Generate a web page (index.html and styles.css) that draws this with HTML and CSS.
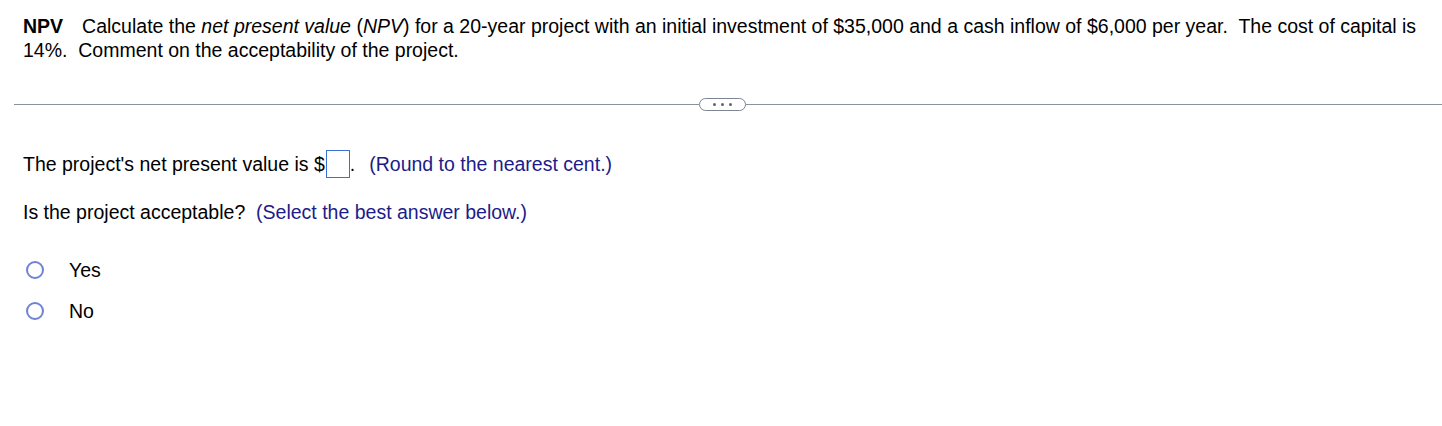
FILE: index.html
```html
<!DOCTYPE html>
<html>
<head>
<meta charset="utf-8">
<link rel="stylesheet" href="styles.css">
</head>
<body>
<div class="page">
  <div class="problem">
    <p class="stem"><b class="tag">NPV</b>Calculate the <i>net present value</i> (<i>NPV</i>) for a 20-year project with an initial investment of $35,000 and a cash inflow of $6,000 per year.&nbsp; The cost of capital is<br>14%.&nbsp; Comment on the acceptability of the project.</p>
  </div>
  <div class="divider">
    <span class="line line-left"></span>
    <span class="pill"><span class="dot"></span><span class="dot"></span><span class="dot"></span></span>
    <span class="line"></span>
  </div>
  <div class="answer">
    <p class="q">The project's net present value is $<span class="box"></span>.<span class="hint hint-gap">(Round to the nearest cent.)</span></p>
    <p class="q q2">Is the project acceptable?&nbsp; <span class="hint">(Select the best answer below.)</span></p>
    <ul class="choices">
      <li class="choice"><span class="radio"></span><span class="label">Yes</span></li>
      <li class="choice"><span class="radio"></span><span class="label">No</span></li>
    </ul>
  </div>
</div>
</body>
</html>
```

FILE: styles.css
```css
html, body {
  margin: 0;
  padding: 0;
  background: #ffffff;
}
body {
  font-family: "Liberation Sans", Arial, sans-serif;
  font-size: 19.5px;
  color: #000000;
}
.page {
  width: 1442px;
}
.problem {
  padding: 14px 20px 0 23px;
}
.stem {
  margin: 0;
  line-height: 24px;
}
.tag {
  font-weight: bold;
  display: inline-block;
  margin-right: 19px;
}
.divider {
  display: flex;
  align-items: center;
  margin-top: 35px;
  padding-left: 14px;
  height: 14px;
}
.line {
  flex: 1;
  height: 1px;
  background: #8a929c;
}
.line-left {
  flex: none;
  width: 685px;
}
.pill {
  display: flex;
  align-items: center;
  justify-content: center;
  gap: 5px;
  width: 45px;
  height: 11px;
  border: 1px solid #7d8590;
  border-radius: 7px;
  background: #fff;
}
.dot {
  width: 3px;
  height: 3px;
  background: #5d6570;
  border-radius: 50%;
}
.answer {
  padding-left: 23px;
  padding-top: 39px;
}
.q {
  margin: 0;
  line-height: 28px;
  display: flex;
  align-items: center;
  white-space: pre;
}
.q2 {
  margin-top: 20px;
}
.box {
  display: inline-block;
  width: 22px;
  height: 26px;
  border: 1px solid #3a6fd8;
  margin-left: 1px;
}
.hint {
  color: #1c1c8a;
}
.hint-gap {
  margin-left: 14px;
}
.choices {
  list-style: none;
  margin: 32px 0 0 0;
  padding: 0;
}
.choice {
  display: flex;
  align-items: center;
  height: 24px;
  margin-bottom: 17px;
}
.radio {
  box-sizing: border-box;
  width: 18px;
  height: 18px;
  border: 2px solid #6f82d8;
  border-radius: 50%;
  margin-left: 3px;
}
.label {
  margin-left: 25px;
}
```
